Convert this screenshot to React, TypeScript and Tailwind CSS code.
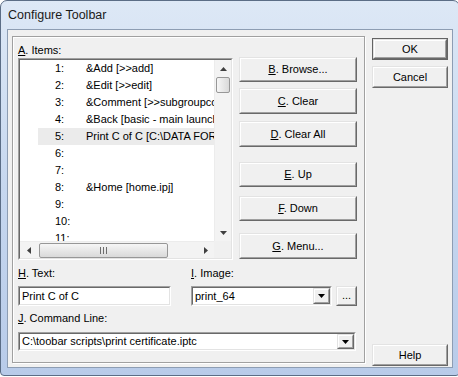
import type { ReactNode } from "react";

type Box = { children?: ReactNode; className?: string };

// classic 3D raised edge (buttons)
function Raised({ children, className = "" }: Box) {
  return (
    <div className={`flex border border-t-[#e3e3e3] border-l-[#e3e3e3] border-r-[#696969] border-b-[#696969] bg-[#f0f0f0] ${className}`}>
      <div className="flex flex-1 items-center justify-center border border-t-white border-l-white border-r-[#a0a0a0] border-b-[#a0a0a0]">
        {children}
      </div>
    </div>
  );
}

// classic 3D sunken edge (fields, list)
function Sunken({ children, className = "" }: Box) {
  return (
    <div className={`flex border border-t-[#a0a0a0] border-l-[#a0a0a0] border-r-white border-b-white ${className}`}>
      <div className="flex flex-1 min-w-0 border border-t-[#696969] border-l-[#696969] border-r-[#e3e3e3] border-b-[#e3e3e3] bg-white">
        {children}
      </div>
    </div>
  );
}

function Arrow({ dir, solid = false }: { dir: "up" | "down" | "left" | "right"; solid?: boolean }) {
  const pts = {
    up: "0,4 3.5,0 7,4",
    down: "0,0 7,0 3.5,4",
    left: "4,0 4,7 0,3.5",
    right: "0,0 0,7 4,3.5",
  }[dir];
  const w = dir === "up" || dir === "down" ? 7 : 4;
  const h = dir === "up" || dir === "down" ? 4 : 7;
  return (
    <svg width={w} height={h} viewBox={`0 0 ${w} ${h}`}>
      <polygon points={pts} fill={solid ? "#000" : "#3f3f3f"} />
    </svg>
  );
}

function Combo({ value, className = "" }: { value: string; className?: string }) {
  return (
    <Sunken className={className}>
      <div className="flex-1 min-w-0 pl-[2px] flex items-center overflow-hidden whitespace-nowrap">{value}</div>
      <Raised className="w-[17px]">
        <Arrow dir="down" solid />
      </Raised>
    </Sunken>
  );
}

const rows: [string, string][] = [
  ["1:", "&Add [>>add]"],
  ["2:", "&Edit [>>edit]"],
  ["3:", "&Comment [>>subgroupcomment]"],
  ["4:", "&Back [basic - main launcher]"],
  ["5:", "Print C of C [C:\\DATA FORMS\\print certificate.iptc]"],
  ["6:", ""],
  ["7:", ""],
  ["8:", "&Home [home.ipj]"],
  ["9:", ""],
  ["10:", ""],
  ["11:", ""],
];

function ItemList() {
  return (
    <Sunken className="w-[215px] h-[202px]">
      <div className="flex flex-col flex-1 min-w-0">
        <div className="flex flex-1 min-h-0">
          <div className="flex-1 min-w-0 overflow-hidden">
            {rows.map(([n, t], i) => (
              <div key={n} className="h-[17px] flex whitespace-nowrap">
                <div className="w-[18px] shrink-0" />
                <div className={`flex flex-1 min-w-0 items-center overflow-hidden ${i === 4 ? "bg-[#ebebeb]" : ""}`}>
                  <span className="w-[17px] shrink-0" />
                  <span className="w-[31px] shrink-0">{n}</span>
                  <span>{t}</span>
                </div>
              </div>
            ))}
          </div>
          {/* vertical scrollbar */}
          <div className="w-[17px] flex flex-col bg-[#f3f3f3] border-l border-[#ececec]">
            <div className="h-[17px] flex items-center justify-center">
              <Arrow dir="up" />
            </div>
            <div className="mx-[1px] h-[16px] rounded-[2px] border border-[#979797] bg-gradient-to-r from-[#f6f6f6] to-[#d9d9d9]" />
            <div className="flex-1" />
            <div className="h-[17px] flex items-center justify-center">
              <Arrow dir="down" />
            </div>
          </div>
        </div>
        {/* horizontal scrollbar */}
        <div className="h-[17px] flex">
          <div className="flex-1 flex items-center bg-[#f3f3f3] border-t border-[#ececec]">
            <div className="w-[17px] h-full flex items-center justify-center">
              <Arrow dir="left" />
            </div>
            <div className="ml-[2px] w-[129px] h-[15px] rounded-[2px] border border-[#979797] bg-gradient-to-b from-[#f6f6f6] to-[#d9d9d9] flex items-center justify-center gap-[2px]">
              <span className="w-px h-[7px] bg-[#6d6d6d]" />
              <span className="w-px h-[7px] bg-[#6d6d6d]" />
              <span className="w-px h-[7px] bg-[#6d6d6d]" />
            </div>
            <div className="flex-1" />
            <div className="w-[17px] h-full flex items-center justify-center">
              <Arrow dir="right" />
            </div>
          </div>
          <div className="w-[17px] bg-[#f0f0f0]" />
        </div>
      </div>
    </Sunken>
  );
}

export default function App() {
  return (
    <div className="w-[458px] h-[377px] overflow-hidden bg-white">
      <div className="w-[460px] h-[376px] flex flex-col rounded-t-[7px] rounded-b-[4px] border border-[#5b6d86] bg-gradient-to-b from-[#dde8f6] via-[#c6d7ef] to-[#b8cbe9] px-[6px] pb-[7px]">
        {/* title bar */}
        <div className="h-[28px] flex items-center pl-[1px] font-['Liberation_Sans',Arial,sans-serif] text-[12.5px] text-[#1a1a1a]">
          Configure Toolbar
        </div>

        {/* client area */}
        <div className="flex-1 flex border border-[#8d9db3] bg-[#f0f0f0] font-['Liberation_Sans',Arial,sans-serif] text-[11px] leading-[13px] text-black">
          {/* etched panel */}
          <div className="ml-[4px] mt-[6px] w-[353px] h-[327px] border border-[#a0a0a0] shadow-[1px_1px_0_#ffffff,inset_1px_1px_0_#ffffff] pl-[5px] pt-[7px]">
            <div className="h-[13px]">
              <u>A</u>. Items:
            </div>
            <div className="flex mt-[1px]">
              <ItemList />
              <div className="ml-[6px] mt-[-1px] w-[118px] flex flex-col">
                <Raised className="h-[25px]">
                  <span><u>B</u>. Browse...</span>
                </Raised>
                <Raised className="h-[26px] mt-[6px]">
                  <span><u>C</u>. Clear</span>
                </Raised>
                <Raised className="h-[26px] mt-[7px]">
                  <span><u>D</u>. Clear All</span>
                </Raised>
                <Raised className="h-[25px] mt-[15px]">
                  <span><u>E</u>. Up</span>
                </Raised>
                <Raised className="h-[25px] mt-[9px]">
                  <span><u>F</u>. Down</span>
                </Raised>
                <Raised className="h-[26px] mt-[12px]">
                  <span><u>G</u>. Menu...</span>
                </Raised>
              </div>
            </div>

            <div className="flex mt-[7px] h-[13px]">
              <div className="w-[173px]">
                <u>H</u>. Text:
              </div>
              <div>
                <u>I</u>. Image:
              </div>
            </div>
            <div className="flex mt-[6px]">
              <Sunken className="w-[153px] h-[20px]">
                <div className="pl-[2px] flex items-center">Print C of C</div>
              </Sunken>
              <Combo value="print_64" className="ml-[20px] w-[141px] h-[20px]" />
              <Raised className="ml-[4px] w-[21px] h-[20px]">
                <span className="pb-[2px]">...</span>
              </Raised>
            </div>

            <div className="mt-[6px] h-[13px]">
              <u>J</u>. Command Line:
            </div>
            <Combo value="C:\toobar scripts\print certificate.iptc" className="mt-[7px] w-[338px] h-[19px]" />
          </div>

          {/* dialog buttons */}
          <div className="ml-[7px] w-[76px] flex flex-col pt-[8px] pb-[1px]">
            <div className="h-[22px] flex border border-[#646464]">
              <Raised className="flex-1">
                <span>OK</span>
              </Raised>
            </div>
            <Raised className="h-[22px] mt-[6px]">
              <span>Cancel</span>
            </Raised>
            <div className="flex-1" />
            <Raised className="h-[22px]">
              <span>Help</span>
            </Raised>
          </div>
        </div>
      </div>
    </div>
  );
}
